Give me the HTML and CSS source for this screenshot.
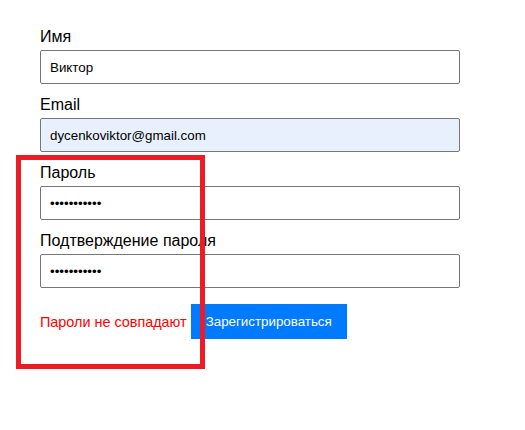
FILE: index.html
```html
<!DOCTYPE html>
<html lang="ru">
<head>
<meta charset="utf-8">
<link rel="stylesheet" href="styles.css">
</head>
<body>
<div class="page">
  <form class="form">
    <label class="label" for="name">Имя</label>
    <input class="input" id="name" type="text" value="Виктор">
    <label class="label" for="email">Email</label>
    <input class="input input-autofill" id="email" type="email" value="dycenkoviktor@gmail.com">
    <label class="label" for="pass">Пароль</label>
    <input class="input" id="pass" type="password" value="12345678901">
    <label class="label" for="pass2">Подтверждение пароля</label>
    <input class="input" id="pass2" type="password" value="12345678901">
    <div class="actions">
      <span class="error">Пароли не совпадают</span>
      <button class="btn" type="button">Зарегистрироваться</button>
    </div>
  </form>
  <div class="highlight"></div>
</div>
</body>
</html>
```
FILE: styles.css
```css
* { box-sizing: border-box; }
html, body { margin: 0; padding: 0; background: #fff; }
body { font-family: "Liberation Sans", Arial, sans-serif; }
.page { position: relative; width: 525px; height: 430px; }
.form {
  display: flex;
  flex-direction: column;
  width: 420px;
  margin-left: 40px;
  padding-top: 28px;
}
.label {
  display: block;
  font-size: 16px;
  line-height: 18px;
  color: #000;
  margin-bottom: 4px;
}
.input {
  display: block;
  width: 420px;
  height: 34px;
  margin: 0 0 12px;
  padding: 0 9px;
  border: 1px solid #767676;
  border-radius: 2px;
  background: #fff;
  font-family: "Liberation Sans", Arial, sans-serif;
  font-size: 13.33px;
  color: #000;
  outline: none;
}
.input-autofill { background: #e8f0fe; }
.actions {
  display: flex;
  align-items: center;
  gap: 4px;
  margin-top: 4px;
}
.error {
  color: #ff0000;
  font-size: 14.4px;
}
.btn {
  height: 35px;
  padding: 0 15px;
  border: none;
  background: #007bff;
  color: #fff;
  font-family: "Liberation Sans", Arial, sans-serif;
  font-size: 13.33px;
}
.highlight {
  position: absolute;
  left: 16px;
  top: 155px;
  width: 189px;
  height: 214px;
  border: 5px solid #ed1c24;
}
```
